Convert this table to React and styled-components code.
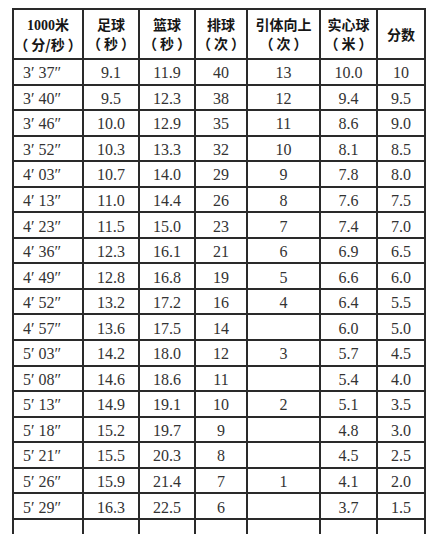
import React from "react";
import styled, { createGlobalStyle } from "styled-components";

const Global = createGlobalStyle`
  html, body { margin: 0; padding: 0; background: #fff; }
  body { font-family: "Liberation Serif", "Noto Sans CJK SC", serif; }
`;

const Page = styled.div`
  padding: 8px 0 0 12px;
  height: 534px;
  overflow: hidden;
  box-sizing: border-box;
`;

const Table = styled.table`
  border-collapse: collapse;
  table-layout: fixed;
  width: 414px;
  border: 2px solid #2a2a2a;
`;

const Col = styled.col`
  width: ${(p) => p.$w}px;
`;

const HeadRow = styled.tr`
  height: 50px;
`;

const HeadCell = styled.th`
  border: 2px solid #2a2a2a;
  padding: 0;
  font-family: "Noto Sans CJK SC", sans-serif;
  font-weight: 700;
  font-size: 14px;
  line-height: 19px;
  color: #161616;
  text-align: center;
  vertical-align: middle;
`;

const HeadLine = styled.div`
  white-space: nowrap;
`;

const HeadNum = styled.span`
  font-family: "Liberation Serif", serif;
  font-weight: 700;
`;

const Paren = styled.span`
  display: inline-block;
  ${(p) => (p.$open ? "padding-right: 3px;" : "padding-left: 3px;")}
`;

const Unit = ({ children }) => (
  <>
    <Paren $open>（</Paren>
    {children}
    <Paren>）</Paren>
  </>
);

const Row = styled.tr`
  height: 25.55px;
`;

const Cell = styled.td`
  border: 2px solid #2a2a2a;
  padding: 3px 0 0 ${(p) => (p.$left ? "9px" : "0")};
  font-family: "Liberation Serif", "Noto Sans CJK SC", serif;
  font-size: 16px;
  line-height: 20px;
  color: #333;
  text-align: ${(p) => (p.$left ? "left" : "center")};
  vertical-align: middle;
  white-space: nowrap;
`;

const widths = [70, 56, 56, 52, 73, 57, 48];

const headers = [
  [<><HeadNum>1000</HeadNum>米</>, <Unit>分/秒</Unit>],
  ["足球", <Unit>秒</Unit>],
  ["篮球", <Unit>秒</Unit>],
  ["排球", <Unit>次</Unit>],
  ["引体向上", <Unit>次</Unit>],
  ["实心球", <Unit>米</Unit>],
  ["分数"],
];

const rows = [
  ["3′ 37″", "9.1", "11.9", "40", "13", "10.0", "10"],
  ["3′ 40″", "9.5", "12.3", "38", "12", "9.4", "9.5"],
  ["3′ 46″", "10.0", "12.9", "35", "11", "8.6", "9.0"],
  ["3′ 52″", "10.3", "13.3", "32", "10", "8.1", "8.5"],
  ["4′ 03″", "10.7", "14.0", "29", "9", "7.8", "8.0"],
  ["4′ 13″", "11.0", "14.4", "26", "8", "7.6", "7.5"],
  ["4′ 23″", "11.5", "15.0", "23", "7", "7.4", "7.0"],
  ["4′ 36″", "12.3", "16.1", "21", "6", "6.9", "6.5"],
  ["4′ 49″", "12.8", "16.8", "19", "5", "6.6", "6.0"],
  ["4′ 52″", "13.2", "17.2", "16", "4", "6.4", "5.5"],
  ["4′ 57″", "13.6", "17.5", "14", "", "6.0", "5.0"],
  ["5′ 03″", "14.2", "18.0", "12", "3", "5.7", "4.5"],
  ["5′ 08″", "14.6", "18.6", "11", "", "5.4", "4.0"],
  ["5′ 13″", "14.9", "19.1", "10", "2", "5.1", "3.5"],
  ["5′ 18″", "15.2", "19.7", "9", "", "4.8", "3.0"],
  ["5′ 21″", "15.5", "20.3", "8", "", "4.5", "2.5"],
  ["5′ 26″", "15.9", "21.4", "7", "1", "4.1", "2.0"],
  ["5′ 29″", "16.3", "22.5", "6", "", "3.7", "1.5"],
  ["", "", "", "", "", "", ""],
];

export default function App() {
  return (
    <>
      <Global />
      <Page>
        <Table>
          <colgroup>
            {widths.map((w, i) => (
              <Col key={i} $w={w} />
            ))}
          </colgroup>
          <thead>
            <HeadRow>
              {headers.map((h, i) => (
                <HeadCell key={i}>
                  {h.map((l, j) => (
                    <HeadLine key={j}>{l}</HeadLine>
                  ))}
                </HeadCell>
              ))}
            </HeadRow>
          </thead>
          <tbody>
            {rows.map((r, i) => (
              <Row key={i}>
                {r.map((c, j) => (
                  <Cell key={j} $left={j === 0}>
                    {c}
                  </Cell>
                ))}
              </Row>
            ))}
          </tbody>
        </Table>
      </Page>
    </>
  );
}
